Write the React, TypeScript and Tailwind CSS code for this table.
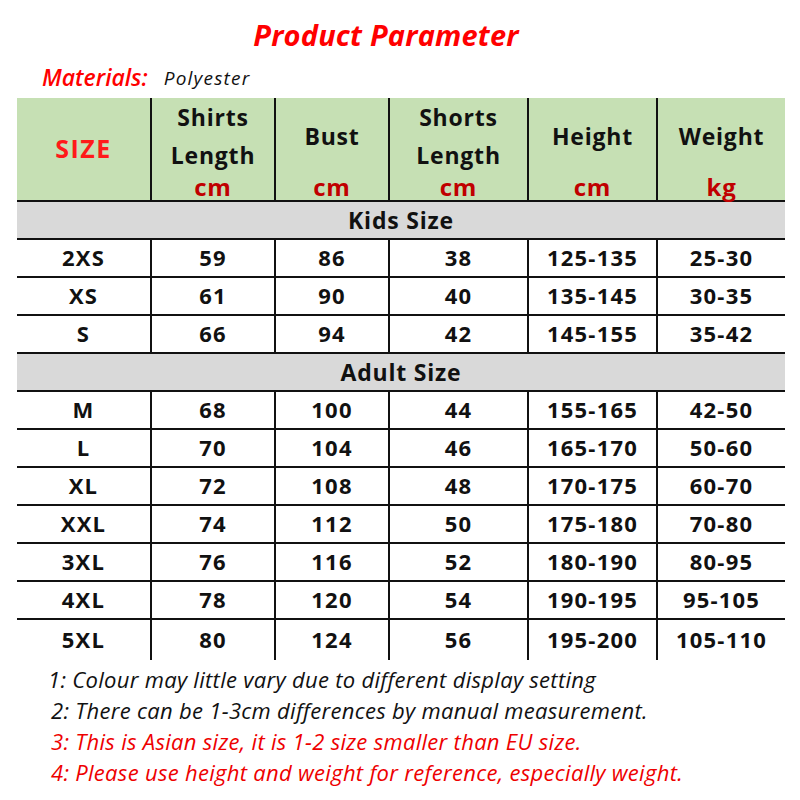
import React from "react";

const cols = "grid grid-cols-[133px_124px_114px_139px_129px_129px]";

const kids = [
  ["2XS", "59", "86", "38", "125-135", "25-30"],
  ["XS", "61", "90", "40", "135-145", "30-35"],
  ["S", "66", "94", "42", "145-155", "35-42"],
];
const adults = [
  ["M", "68", "100", "44", "155-165", "42-50"],
  ["L", "70", "104", "46", "165-170", "50-60"],
  ["XL", "72", "108", "48", "170-175", "60-70"],
  ["XXL", "74", "112", "50", "175-180", "70-80"],
  ["3XL", "76", "116", "52", "180-190", "80-95"],
  ["4XL", "78", "120", "54", "190-195", "95-105"],
  ["5XL", "80", "124", "56", "195-200", "105-110"],
];

function Row({ r, last }: { r: string[]; last?: boolean }) {
  return (
    <div className={`${cols} ${last ? "h-[40px]" : "h-[38px] border-b-2 border-[#111]"}`}>
      {r.map((c, i) => (
        <div
          key={i}
          className={`flex items-center justify-center pb-[1px] text-[22px] font-bold text-[#111] tracking-[1.2px] ${i > 0 ? "border-l-2 border-[#111]" : ""}`}
        >
          {c}
        </div>
      ))}
    </div>
  );
}

function Section({ label }: { label: string }) {
  return (
    <div className="h-[38px] border-b-2 border-[#111] bg-[#d9d9d9] flex items-center justify-center text-[23px] font-bold tracking-[0.8px] text-[#111]">
      {label}
    </div>
  );
}

function HeadCell({ lines, unit, first }: { lines: string[]; unit: string; first?: boolean }) {
  return (
    <div className={`flex flex-col ${first ? "" : "border-l-2 border-[#111]"}`}>
      <div className="h-[76px] flex flex-col items-center justify-center">
        {lines.map((l) => (
          <div key={l} className="leading-[38px] text-[23px] font-bold tracking-[0.8px] text-[#111]">
            {l}
          </div>
        ))}
      </div>
      <div className="h-[26px] flex items-center justify-center text-[24px] font-bold tracking-[0.8px] text-[#c00000]">
        {unit}
      </div>
    </div>
  );
}

export default function App() {
  return (
    <div
      className="w-[800px] h-[800px] bg-white relative overflow-hidden"
      style={{ fontFamily: '"Open Sans", "Noto Sans", sans-serif' }}
    >
      <div className="h-[60px] flex items-center justify-center pt-[10px] pr-[28px]">
        <div className="text-[29px] font-bold italic text-[#ff0000] tracking-[0.2px]">Product Parameter</div>
      </div>
      <div className="h-[38px] flex items-center pl-[42px] pb-[4px]">
        <span className="text-[23px] font-semibold italic text-[#ff0000]">Materials:</span>
        <span className="ml-[16px] text-[19px] italic text-[#111] tracking-[1.2px] mt-[2px]">Polyester</span>
      </div>
      <div className="ml-[17px] w-[768px]">
        <div className={`${cols} h-[104px] bg-[#c6e0b4] border-b-2 border-[#111]`}>
          <div className="flex items-center justify-center text-[25px] font-bold tracking-[1.5px] text-[#ff1a1a]">SIZE</div>
          <HeadCell lines={["Shirts", "Length"]} unit="cm" />
          <HeadCell lines={["Bust"]} unit="cm" />
          <HeadCell lines={["Shorts", "Length"]} unit="cm" />
          <HeadCell lines={["Height"]} unit="cm" />
          <HeadCell lines={["Weight"]} unit="kg" />
        </div>
        <Section label="Kids Size" />
        {kids.map((r) => (
          <Row key={r[0]} r={r} />
        ))}
        <Section label="Adult Size" />
        {adults.map((r, i) => (
          <Row key={r[0]} r={r} last={i === adults.length - 1} />
        ))}
      </div>
      <div className="mt-[4px] text-[22px] italic leading-[31px] tracking-[0.3px]">
        <div className="pl-[48px] text-[#111]">1: Colour may little vary due to different display setting</div>
        <div className="pl-[51px] text-[#111]">2: There can be 1-3cm differences by manual measurement.</div>
        <div className="pl-[51px] text-[#ee0000]">3: This is Asian size, it is 1-2 size smaller than EU size.</div>
        <div className="pl-[51px] text-[#ee0000]">4: Please use height and weight for reference, especially weight.</div>
      </div>
    </div>
  );
}
